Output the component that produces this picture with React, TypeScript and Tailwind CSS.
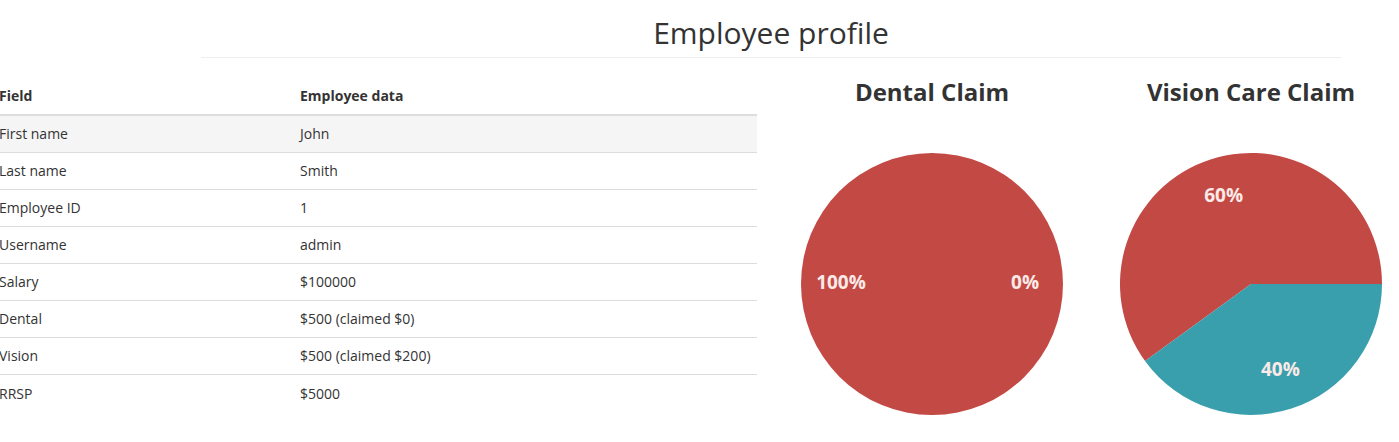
import * as React from 'react';

const rows: [string, string][] = [
  ['First name', 'John'],
  ['Last name', 'Smith'],
  ['Employee ID', '1'],
  ['Username', 'admin'],
  ['Salary', '$100000'],
  ['Dental', '$500 (claimed $0)'],
  ['Vision', '$500 (claimed $200)'],
  ['RRSP', '$5000'],
];

const RED = '#c34945';
const TEAL = '#399fad';
const LABEL = '#fbeae7';

interface Slice {
  value: number;
  color: string;
}

// angles go counter-clockwise from 3 o'clock, like the original chart
function PieChart({ slices }: { slices: Slice[] }) {
  const size = 264;
  const c = size / 2;
  const r = 131;
  const lr = 92;
  const total = slices.reduce((s, x) => s + x.value, 0);

  let start = 0;
  const parts = slices.map(s => {
    const frac = total ? s.value / total : 0;
    const a0 = start;
    const a1 = start + frac * Math.PI * 2;
    start = a1;
    return { ...s, frac, a0, a1, mid: (a0 + a1) / 2 };
  });

  return (
    <svg width={size} height={size} viewBox={`0 0 ${size} ${size}`}>
      {parts.map((p, i) => {
        if (p.frac >= 0.9999) return <circle key={i} cx={c} cy={c} r={r} fill={p.color} />;
        if (p.frac <= 0) return null;
        const x0 = c + r * Math.cos(p.a0);
        const y0 = c - r * Math.sin(p.a0);
        const x1 = c + r * Math.cos(p.a1);
        const y1 = c - r * Math.sin(p.a1);
        const large = p.frac > 0.5 ? 1 : 0;
        return (
          <path
            key={i}
            d={`M${c},${c} L${x0},${y0} A${r},${r} 0 ${large} 0 ${x1},${y1} Z`}
            fill={p.color}
          />
        );
      })}
      {parts.map((p, i) => (
        <text
          key={'l' + i}
          x={c + lr * Math.cos(p.mid) + 1}
          y={c - lr * Math.sin(p.mid) - 2}
          fill={LABEL}
          fontSize="19"
          fontWeight="700"
          textAnchor="middle"
          dominantBaseline="central"
        >
          {Math.round(p.frac * 100)}%
        </text>
      ))}
    </svg>
  );
}

function ChartBox({ title, slices }: { title: string; slices: Slice[] }) {
  return (
    <div className="flex w-[300px] shrink-0 flex-col items-center">
      <h2 className="mt-[20px] text-[24px] font-bold leading-[28px] text-[#333]">{title}</h2>
      <div className="mt-[46px]">
        <PieChart slices={slices} />
      </div>
    </div>
  );
}

export default function App() {
  return (
    <div
      className="h-[442px] w-[1399px] overflow-hidden bg-white text-[#333]"
      style={{ fontFamily: '"Open Sans", "Noto Sans", sans-serif' }}
    >
      <div className="ml-[201px] w-[1140px] border-b border-[#eeeeee] pt-[15px] pb-[6px] text-center">
        <h1 className="text-[30px] font-normal leading-[36px]">Employee profile</h1>
      </div>

      <div className="flex">
        <div className="ml-[-9px] mt-[19px] w-[766px] shrink-0 text-[14px] leading-[20px]">
          <div className="flex h-[39px] items-center border-b-2 border-[#dddddd] pt-[1px] font-bold">
            <div className="w-[301px] px-2">Field</div>
            <div className="px-2">Employee data</div>
          </div>
          {rows.map(([k, v], i) => (
            <div
              key={k}
              className={
                'flex h-[37px] items-center ' +
                (i === 0 ? 'bg-[#f5f5f5] ' : '') +
                (i < rows.length - 1 ? 'border-b border-[#dddddd]' : '')
              }
            >
              <div className="w-[301px] px-2">{k}</div>
              <div className="px-2">{v}</div>
            </div>
          ))}
        </div>

        <div className="ml-[25px]">
          <ChartBox title="Dental Claim" slices={[{ value: 500, color: RED }, { value: 0, color: TEAL }]} />
        </div>
        <div className="ml-[19px]">
          <ChartBox title="Vision Care Claim" slices={[{ value: 300, color: RED }, { value: 200, color: TEAL }]} />
        </div>
      </div>
    </div>
  );
}
